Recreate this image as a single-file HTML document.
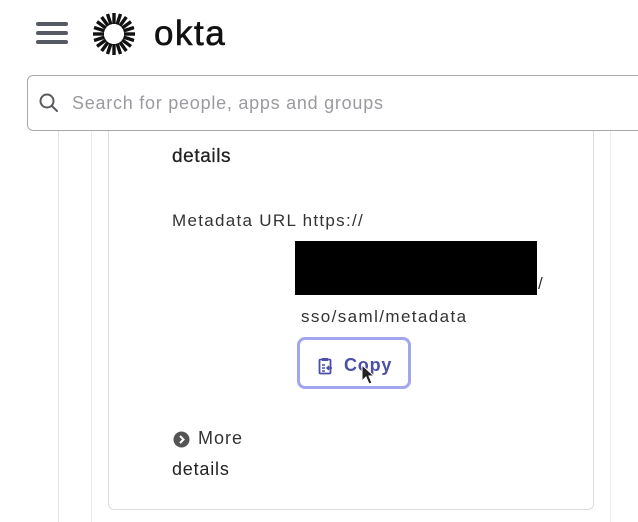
<!DOCTYPE html>
<html><head><meta charset="utf-8"><style>
body{margin:0;width:638px;height:522px;background:#fff;position:relative;overflow:hidden;font-family:"Liberation Sans",sans-serif;color:#1d1d21}
.a{position:absolute;white-space:nowrap}
</style></head><body>
<div class="a" style="left:36px;top:22px;width:32px;height:4px;background:#555a63;border-radius:2px"></div>
<div class="a" style="left:36px;top:31px;width:32px;height:4px;background:#555a63;border-radius:2px"></div>
<div class="a" style="left:36px;top:40px;width:32px;height:4px;background:#555a63;border-radius:2px"></div>
<svg class="a" style="left:91px;top:11px" width="46" height="46" viewBox="-23 -23 46 46">
<g stroke="#111" stroke-width="3.4" stroke-linecap="butt">
<line x1="0" y1="-10" x2="0" y2="-21" transform="rotate(0)"/><line x1="0" y1="-10" x2="0" y2="-21" transform="rotate(18)"/><line x1="0" y1="-10" x2="0" y2="-21" transform="rotate(36)"/><line x1="0" y1="-10" x2="0" y2="-21" transform="rotate(54)"/><line x1="0" y1="-10" x2="0" y2="-21" transform="rotate(72)"/><line x1="0" y1="-10" x2="0" y2="-21" transform="rotate(90)"/><line x1="0" y1="-10" x2="0" y2="-21" transform="rotate(108)"/><line x1="0" y1="-10" x2="0" y2="-21" transform="rotate(126)"/><line x1="0" y1="-10" x2="0" y2="-21" transform="rotate(144)"/><line x1="0" y1="-10" x2="0" y2="-21" transform="rotate(162)"/><line x1="0" y1="-10" x2="0" y2="-21" transform="rotate(180)"/><line x1="0" y1="-10" x2="0" y2="-21" transform="rotate(198)"/><line x1="0" y1="-10" x2="0" y2="-21" transform="rotate(216)"/><line x1="0" y1="-10" x2="0" y2="-21" transform="rotate(234)"/><line x1="0" y1="-10" x2="0" y2="-21" transform="rotate(252)"/><line x1="0" y1="-10" x2="0" y2="-21" transform="rotate(270)"/><line x1="0" y1="-10" x2="0" y2="-21" transform="rotate(288)"/><line x1="0" y1="-10" x2="0" y2="-21" transform="rotate(306)"/><line x1="0" y1="-10" x2="0" y2="-21" transform="rotate(324)"/><line x1="0" y1="-10" x2="0" y2="-21" transform="rotate(342)"/>
</g></svg>
<div class="a" style="left:154px;top:14px;font-size:35px;letter-spacing:1.5px;color:#111;-webkit-text-stroke:0.6px #111">okta</div>
<div class="a" style="left:58px;top:131px;width:1px;height:391px;background:#e4e4e4"></div>
<div class="a" style="left:91px;top:131px;width:1px;height:391px;background:#e8e8e8"></div>
<div class="a" style="left:108px;top:120px;width:484px;height:388px;border:1px solid #dcdcdc;border-radius:6px"></div>
<div class="a" style="left:610px;top:131px;width:1px;height:391px;background:#ececec"></div>
<div class="a" style="left:27px;top:75px;width:620px;height:54px;border:1px solid #a8a8a8;border-radius:6px;background:#fff"></div>
<svg class="a" style="left:38px;top:92px" width="22" height="22" viewBox="0 0 22 22"><circle cx="9" cy="9" r="6.5" fill="none" stroke="#5a5a60" stroke-width="2"/><line x1="14" y1="14" x2="19" y2="19" stroke="#5a5a60" stroke-width="2" stroke-linecap="round"/></svg>
<div class="a" style="left:72px;top:93px;font-size:18px;letter-spacing:0.75px;color:#9a9a9f">Search for people, apps and groups</div>
<div class="a" style="left:172px;top:146px;font-size:19px;letter-spacing:0.6px;color:#222;-webkit-text-stroke:0.3px #222">details</div>
<div class="a" style="left:172px;top:211px;font-size:17px;letter-spacing:1.3px;color:#333">Metadata URL https://</div>
<div class="a" style="left:538px;top:274px;font-size:17px;color:#333">/</div>
<div class="a" style="left:295px;top:241px;width:242px;height:54px;background:#000"></div>
<div class="a" style="left:301px;top:307px;font-size:17px;letter-spacing:1.4px;color:#333">sso/saml/metadata</div>
<div class="a" style="left:297px;top:337px;width:114px;height:52px;border:3px solid #a3a6ee;border-radius:8px;background:#fff;box-sizing:border-box"></div>
<svg class="a" style="left:318px;top:357px" width="16" height="18" viewBox="0 0 16 18"><rect x="1.5" y="2.5" width="11" height="14" rx="1" fill="none" stroke="#4b4fa8" stroke-width="1.8"/><rect x="4" y="1" width="6" height="3" fill="#4b4fa8"/><path d="M4 8h3M4 11h3M4 14h3M14 11h-5M11 9l-2 2 2 2" stroke="#4b4fa8" stroke-width="1.5" fill="none"/></svg>
<div class="a" style="left:344px;top:355px;font-size:18px;font-weight:bold;letter-spacing:0.8px;color:#4b4fa8">Copy</div>
<svg class="a" style="left:360px;top:364px" width="16" height="22" viewBox="0 0 16 22"><path d="M2 1v16l4-4 3 7 3-1-3-7h5z" fill="#222" stroke="#fff" stroke-width="1"/></svg>
<svg class="a" style="left:173px;top:431px" width="17" height="17" viewBox="0 0 17 17"><circle cx="8.5" cy="8.5" r="8" fill="#555"/><path d="M7 5l3.5 3.5L7 12" stroke="#fff" stroke-width="2" fill="none"/></svg>
<div class="a" style="left:198px;top:428px;font-size:18px;letter-spacing:1px;color:#333">More</div>
<div class="a" style="left:172px;top:459px;font-size:18px;letter-spacing:0.8px;color:#222">details</div>
</body></html>
